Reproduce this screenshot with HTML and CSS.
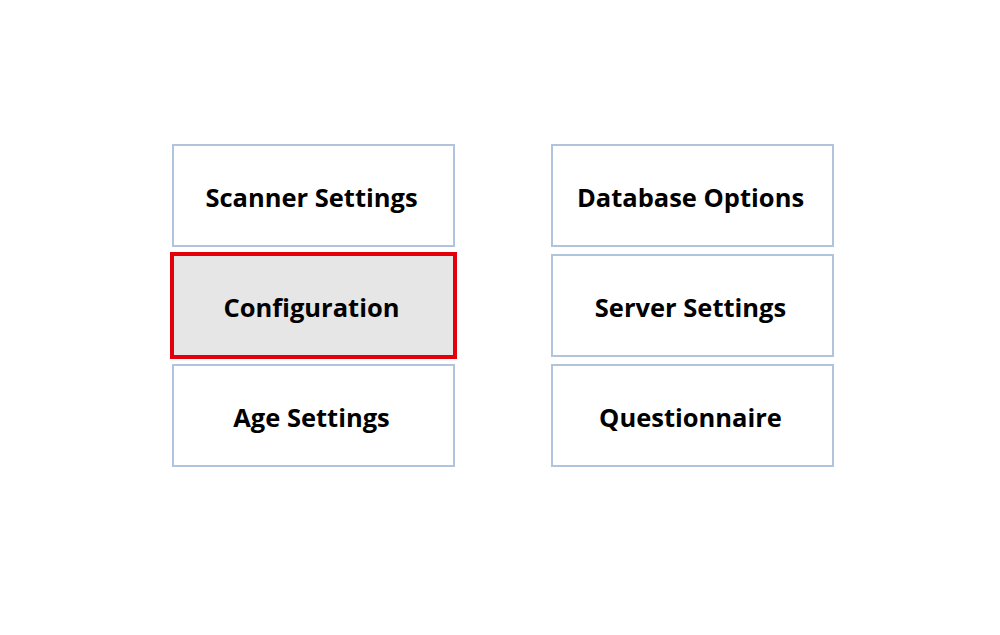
FILE: index.html
```html
<!DOCTYPE html>
<html>
<head>
<meta charset="utf-8">
<link rel="stylesheet" href="styles.css">
</head>
<body>
<div class="page">
  <div class="grid">
    <div class="tile">Scanner Settings</div>
    <div class="tile">Database Options</div>
    <div class="tile selected">Configuration</div>
    <div class="tile">Server Settings</div>
    <div class="tile">Age Settings</div>
    <div class="tile">Questionnaire</div>
  </div>
</div>
</body>
</html>
```

FILE: styles.css
```css
html, body {
  margin: 0;
  padding: 0;
  background: #ffffff;
}
.page {
  width: 1000px;
  height: 635px;
  padding: 144px 0 0 172px;
  box-sizing: border-box;
}
.grid {
  display: grid;
  grid-template-columns: 283px 283px;
  grid-auto-rows: 103px;
  column-gap: 96px;
  row-gap: 7px;
}
.tile {
  box-sizing: border-box;
  border: 2px solid #b0c4de;
  background: #ffffff;
  display: flex;
  align-items: center;
  justify-content: center;
  font-family: "Open Sans", "Noto Sans", sans-serif;
  font-weight: 700;
  font-size: 25.5px;
  color: #000000;
  padding: 2px 4px 0 0;
}
.tile.selected {
  background: #e6e6e6;
  border: 2px solid #e3000b;
  outline: 2px solid #e3000b;
}
```
